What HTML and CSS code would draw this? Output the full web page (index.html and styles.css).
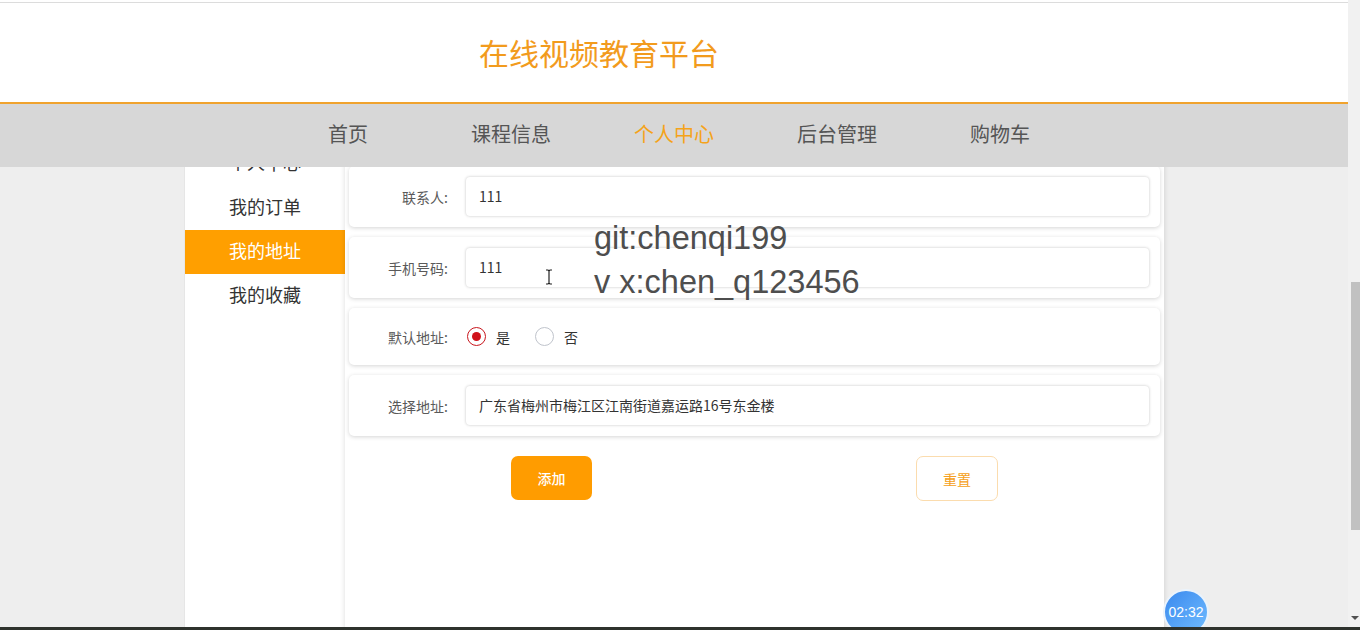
FILE: index.html
```html
<!DOCTYPE html>
<html lang="zh-CN">
<head>
<meta charset="utf-8">
<title>在线视频教育平台</title>
<link rel="stylesheet" href="styles.css">
</head>
<body>
<div class="screen">
  <div class="page">
    <header class="header">
      <div class="brand"><h1 class="title">在线视频教育平台</h1></div>
      <nav class="nav">
        <a class="nav-item">首页</a>
        <a class="nav-item">课程信息</a>
        <a class="nav-item active">个人中心</a>
        <a class="nav-item">后台管理</a>
        <a class="nav-item">购物车</a>
      </nav>
    </header>

    <div class="content">
      <aside class="sidebar">
        <div class="side-item">个人中心</div>
        <div class="side-item">我的订单</div>
        <div class="side-item active">我的地址</div>
        <div class="side-item">我的收藏</div>
      </aside>
      <main class="main">
        <div class="card">
          <label class="label">联系人:</label>
          <div class="input">111</div>
        </div>
        <div class="card">
          <label class="label">手机号码:</label>
          <div class="input">111</div>
        </div>
        <div class="card card-radio">
          <label class="label">默认地址:</label>
          <div class="radios">
            <span class="radio checked"></span><span class="radio-text">是</span>
            <span class="radio"></span><span class="radio-text">否</span>
          </div>
        </div>
        <div class="card">
          <label class="label">选择地址:</label>
          <div class="input">广东省梅州市梅江区江南街道嘉运路16号东金楼</div>
        </div>
        <div class="actions">
          <button class="btn btn-primary">添加</button>
          <button class="btn btn-plain">重置</button>
        </div>
      </main>
    </div>

    <div class="watermark">
      <div>git:chenqi199</div>
      <div>v x:chen_q123456</div>
    </div>
    <svg class="cursor" width="8" height="16" viewBox="0 0 8 16"><path d="M1 1h2l1 1 1-1h2M4 2v12M1 15h2l1-1 1 1h2" fill="none" stroke="#222" stroke-width="1.2"/></svg>
    <div class="timer">02:32</div>
  </div>
  <div class="scrollbar">
    <div class="thumb"></div>
    <div class="arrow"></div>
  </div>
  <div class="bottom-bar"></div>
</div>
</body>
</html>
```

FILE: styles.css
```css
* { box-sizing: border-box; margin: 0; padding: 0; }
html, body { width: 1360px; height: 630px; overflow: hidden; }
body {
  font-family: "Noto Sans CJK SC", "Liberation Sans", sans-serif;
  background: #eeeeee;
}
.screen { display: flex; width: 1360px; height: 630px; position: relative; }
.page {
  width: 1348px;
  height: 630px;
  position: relative;
  overflow: hidden;
  background: #eeeeee;
}
.header {
  position: absolute;
  top: 0; left: 0; right: 0;
  z-index: 5;
}
.brand {
  height: 104px;
  background: #fff;
  border-top: 2px solid #fff;
  border-bottom: 2px solid #f0a32e;
  position: relative;
}
.brand::before {
  content: "";
  display: block;
  height: 1px;
  background: #dcdcdc;
}
.title {
  padding-left: 479px;
  padding-top: 29px;
  font-size: 30px;
  font-weight: normal;
  color: #f29b1d;
  line-height: 40px;
}
.nav {
  height: 63px;
  background: #d7d7d7;
  display: flex;
  justify-content: center;
  align-items: center;
  padding-bottom: 4px;
}
.nav-item {
  width: 163px;
  text-align: center;
  font-size: 20px;
  color: #555;
  line-height: 28px;
}
.nav-item.active { color: #f5a31a; }

.content {
  width: 980px;
  margin: 0 auto;
  padding-top: 142px;
  display: flex;
  height: 630px;
}
.sidebar {
  width: 161px;
  background: #fff;
  border-left: 1px solid #e6e6e6;
}
.side-item {
  height: 44px;
  line-height: 40px;
  text-align: center;
  font-size: 18px;
  color: #333;
}
.side-item.active { background: #ff9f00; color: #fff; }

.main {
  width: 819px;
  background: #fff;
  box-shadow: 0 0 5px rgba(0,0,0,0.14);
  padding: 24px 4px 0;
  display: flex;
  flex-direction: column;
  gap: 10px;
}
.card {
  display: flex;
  align-items: center;
  padding: 11px 11px 11px 0;
  border-radius: 5px;
  box-shadow: 0 1px 4px rgba(0,0,0,0.17);
  background: #fff;
}
.card-radio { height: 57px; padding-top: 0; padding-bottom: 0; }
.label {
  width: 106px;
  padding-right: 7px;
  text-align: right;
  font-size: 14px;
  color: #5a5a5a;
}
.input {
  flex: 1;
  margin-left: 11px;
  height: 39px;
  line-height: 39px;
  padding-left: 13px;
  font-size: 14px;
  color: #333;
  background: #fff;
  border-radius: 4px;
  box-shadow: 0 0 3px rgba(0,0,0,0.24);
}
.radios {
  display: flex;
  align-items: center;
  margin-left: 12px;
}
.radio {
  width: 19px;
  height: 19px;
  border-radius: 50%;
  border: 1px solid #c0c4cc;
  display: inline-flex;
  align-items: center;
  justify-content: center;
}
.radio.checked { border-color: #c8161d; }
.radio.checked::after {
  content: "";
  width: 9px; height: 9px;
  border-radius: 50%;
  background: #d0121b;
}
.radio-text {
  font-size: 14px;
  color: #333;
  margin-left: 10px;
  margin-right: 25px;
}
.actions {
  display: flex;
  justify-content: space-around;
  margin-top: 10px;
}
.btn {
  width: 81px;
  height: 44px;
  font-family: inherit;
  font-size: 14px;
  border-radius: 7px;
  cursor: pointer;
}
.btn-primary {
  background: #ff9c00;
  border: none;
  color: #fff;
  font-weight: 500;
}
.btn-plain {
  background: #fff;
  border: 1px solid #fbdcae;
  color: #f5a020;
  height: 45px;
  width: 82px;
}

.watermark {
  position: absolute;
  left: 594px;
  top: 216px;
  font-family: "Liberation Sans", "Noto Sans", sans-serif;
  font-size: 32.5px;
  line-height: 44px;
  color: #4e4e4e;
  z-index: 6;
}
.cursor { position: absolute; left: 545px; top: 269px; z-index: 6; }
.timer {
  position: absolute;
  left: 1163px;
  top: 589px;
  width: 46px;
  height: 46px;
  border-radius: 50%;
  border: 2px solid #eaf3fc;
  background: linear-gradient(135deg, #3a89ee, #70bcff);
  color: #fff;
  font-family: "Liberation Sans", sans-serif;
  font-size: 14px;
  line-height: 42px;
  text-align: center;
  z-index: 6;
}
.scrollbar {
  width: 12px;
  height: 630px;
  background: #f1f1f1;
  position: relative;
}
.thumb {
  position: absolute;
  left: 3px; right: 0;
  top: 282px;
  height: 248px;
  background: #c1c1c1;
}
.arrow {
  position: absolute;
  right: 1px;
  top: 616px;
  width: 0; height: 0;
  border-left: 4px solid transparent;
  border-right: 4px solid transparent;
  border-top: 4px solid #505050;
}
.bottom-bar {
  position: absolute;
  left: 0; right: 0; bottom: 0;
  height: 3px;
  background: #2e322d;
  z-index: 7;
}
```
